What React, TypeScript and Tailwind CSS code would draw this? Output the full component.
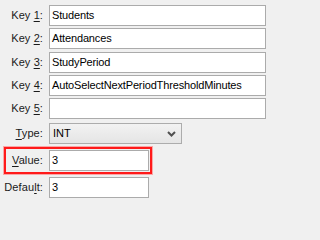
import type { ReactNode } from 'react';

const font = { fontFamily: '"Liberation Sans", Tahoma, Arial, sans-serif' };

const Label = ({ pre, mn, post }: { pre: string; mn: string; post: string }) => (
    <span className="text-[11px] leading-none text-[#1a1a1a] whitespace-pre tracking-[0.1px]">
        {pre}<span className="underline underline-offset-[2px]">{mn}</span>{post}:
    </span>
);

const Field = ({ value, width = 'w-[217px]' }: { value: string; width?: string }) => (
    <div className={`${width} h-[21px] bg-white border border-[#ababab] flex items-center px-[2px] text-[11px] tracking-[-0.15px] text-black`}>
        {value}
    </div>
);

const Row = ({ label, children, mt }: { label: ReactNode; children: ReactNode; mt: string }) => (
    <div className={`flex items-center ${mt}`}>
        <div className="w-[49px] pr-[6px] flex justify-end">{label}</div>
        {children}
    </div>
);

export default function App() {
    return (
        <div className="min-h-screen bg-[#f0f0f0]">
            <div className="w-[271px] h-[202px] bg-[#f0f0f0] pt-[5px] flex flex-col" style={font}>
                <Row mt="" label={<Label pre="Key " mn="1" post="" />}><Field value="Students" /></Row>
                <Row mt="mt-[2px]" label={<Label pre="Key " mn="2" post="" />}><Field value="Attendances" /></Row>
                <Row mt="mt-[3px]" label={<Label pre="Key " mn="3" post="" />}><Field value="StudyPeriod" /></Row>
                <Row mt="mt-[2px]" label={<Label pre="Key " mn="4" post="" />}><Field value="AutoSelectNextPeriodThresholdMinutes" /></Row>
                <Row mt="mt-[2px]" label={<Label pre="Key " mn="5" post="" />}><Field value="" /></Row>

                {/* type dropdown */}
                <Row mt="mt-[4px]" label={<Label pre="" mn="T" post="ype" />}>
                    <div className="w-[133px] h-[21px] border border-[#acacac] bg-gradient-to-b from-[#f2f2f2] to-[#e5e5e5] flex items-center justify-between pl-[3px] pr-[5px] text-[11px] text-black">
                        <span>INT</span>
                        <svg width="9" height="6" viewBox="0 0 9 6">
                            <path d="M1 1 L4.5 4.5 L8 1" fill="none" stroke="#505050" strokeWidth="2" />
                        </svg>
                    </div>
                </Row>

                {/* highlighted value row */}
                <div className="mt-[3px] ml-[4px] w-[148px] h-[27px] border-2 border-[#ff1a1a] shadow-[0_0_0_1px_rgba(255,120,120,0.6)] flex items-center">
                    <div className="w-[43px] pr-[6px] flex justify-end">
                        <Label pre="" mn="V" post="alue" />
                    </div>
                    <Field value="3" width="w-[100px]" />
                </div>

                <Row mt="mt-[3px]" label={<Label pre="Defau" mn="l" post="t" />}><Field value="3" width="w-[100px]" /></Row>
            </div>
        </div>
    );
}
